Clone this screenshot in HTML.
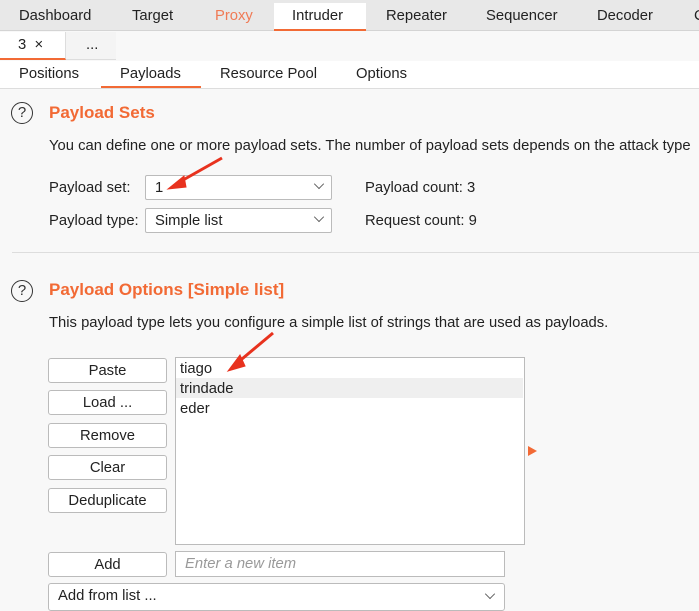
<!DOCTYPE html>
<html><head><style>
*{margin:0;padding:0;box-sizing:border-box}
body{width:699px;height:606px;overflow:hidden;background:#f8f8f8;font-family:"Liberation Sans","Noto Sans CJK SC",sans-serif;font-size:14.8px;color:#222;position:relative}
.a{position:absolute;white-space:nowrap;line-height:19px}
.btn{position:absolute;left:48px;width:119px;height:25px;border:1px solid #bbb;border-radius:3px;background:#fff;text-align:center;line-height:24px}
.sel{position:absolute;left:145px;width:187px;height:25px;border:1px solid #bbb;border-radius:2px;background:#fff;line-height:24px;padding-left:9px}
.chev{position:absolute;right:8px;width:8px;height:8px;border-right:1px solid #555;border-bottom:1px solid #555;transform:rotate(45deg) scale(.9);top:4px}
.h{color:#f26a35;font-weight:bold;font-size:17px}
.q{position:absolute;width:22px;height:22px;border:1.5px solid #333;border-radius:50%;text-align:center;line-height:19px;font-size:15px;color:#333}
</style></head><body>
<div class="a" style="left:0;top:0;width:699px;height:31px;background:#e8e8e8;border-bottom:1px solid #d4d4d4"></div>
<div class="a" style="left:274px;top:3px;width:92px;height:28px;background:#fff;border-bottom:2px solid #f26a35"></div>
<div class="a" style="left:19px;top:7px">Dashboard</div>
<div class="a" style="left:132px;top:7px">Target</div>
<div class="a" style="left:215px;top:7px;color:#f07a55">Proxy</div>
<div class="a" style="left:292px;top:7px">Intruder</div>
<div class="a" style="left:386px;top:7px">Repeater</div>
<div class="a" style="left:486px;top:7px">Sequencer</div>
<div class="a" style="left:597px;top:7px">Decoder</div>
<div class="a" style="left:694px;top:7px">C</div>
<div class="a" style="left:0;top:32px;width:66px;height:28px;background:#fff;border-bottom:2px solid #f26a35;border-right:1px solid #ddd"></div>
<div class="a" style="left:66px;top:32px;width:50px;height:28px;background:#f4f4f4;border-bottom:1px solid #ddd"></div>
<div class="a" style="left:18px;top:36px">3 &nbsp;×</div>
<div class="a" style="left:86px;top:36px">...</div>
<div class="a" style="left:0;top:61px;width:699px;height:28px;background:#fff;border-bottom:1px solid #ddd"></div>
<div class="a" style="left:101px;top:86px;width:100px;height:2px;background:#f26a35"></div>
<div class="a" style="left:19px;top:65px">Positions</div>
<div class="a" style="left:120px;top:65px">Payloads</div>
<div class="a" style="left:220px;top:65px">Resource Pool</div>
<div class="a" style="left:356px;top:65px">Options</div>
<div class="q" style="left:11px;top:102px">?</div>
<div class="a h" style="left:49px;top:103px">Payload Sets</div>
<div class="a" style="left:49px;top:137px">You can define one or more payload sets. The number of payload sets depends on the attack type</div>
<div class="a" style="left:49px;top:179px">Payload set:</div>
<div class="sel" style="top:175px">1<span class="chev"></span></div>
<div class="a" style="left:365px;top:179px">Payload count: 3</div>
<div class="a" style="left:49px;top:212px">Payload type:</div>
<div class="sel" style="top:208px">Simple list<span class="chev"></span></div>
<div class="a" style="left:365px;top:212px">Request count: 9</div>
<div class="a" style="left:12px;top:252px;width:687px;height:1px;background:#ddd"></div>
<div class="q" style="left:11px;top:280px">?</div>
<div class="a h" style="left:49px;top:280px">Payload Options [Simple list]</div>
<div class="a" style="left:49px;top:314px">This payload type lets you configure a simple list of strings that are used as payloads.</div>
<div class="btn" style="top:358px">Paste</div>
<div class="btn" style="top:390px">Load ...</div>
<div class="btn" style="top:423px">Remove</div>
<div class="btn" style="top:455px">Clear</div>
<div class="btn" style="top:488px">Deduplicate</div>
<div class="a" style="left:175px;top:357px;width:350px;height:188px;background:#fff;border:1px solid #bbb"></div>
<div class="a" style="left:176px;top:378px;width:347px;height:20px;background:#efefef"></div>
<div class="a" style="left:180px;top:360px">tiago</div>
<div class="a" style="left:180px;top:380px">trindade</div>
<div class="a" style="left:180px;top:400px">eder</div>
<div class="a" style="left:528px;top:446px;width:0;height:0;border-left:9px solid #f26a35;border-top:5px solid transparent;border-bottom:5px solid transparent"></div>
<div class="btn" style="top:552px">Add</div>
<div class="a" style="left:175px;top:551px;width:330px;height:26px;background:#fff;border:1px solid #bbb;padding-left:9px;line-height:25px;color:#999;font-style:italic">Enter a new item</div>
<div class="a" style="left:48px;top:583px;width:457px;height:28px;background:#fff;border:1px solid #bbb;border-radius:3px;padding-left:9px;line-height:25px">Add from list ...<span class="chev" style="right:10px;top:6px"></span></div>
<svg class="a" style="left:0;top:0" width="699" height="606">
<g fill="#e8321e" stroke="#e8321e">
<line x1="222" y1="158" x2="176" y2="184" stroke-width="3"/>
<polygon points="168,189 184,176 186,187" stroke-width="1"/>
<line x1="273" y1="333" x2="236" y2="364" stroke-width="3"/>
<polygon points="228,371 240,355 245,366" stroke-width="1"/>
</g></svg>
</body></html>
